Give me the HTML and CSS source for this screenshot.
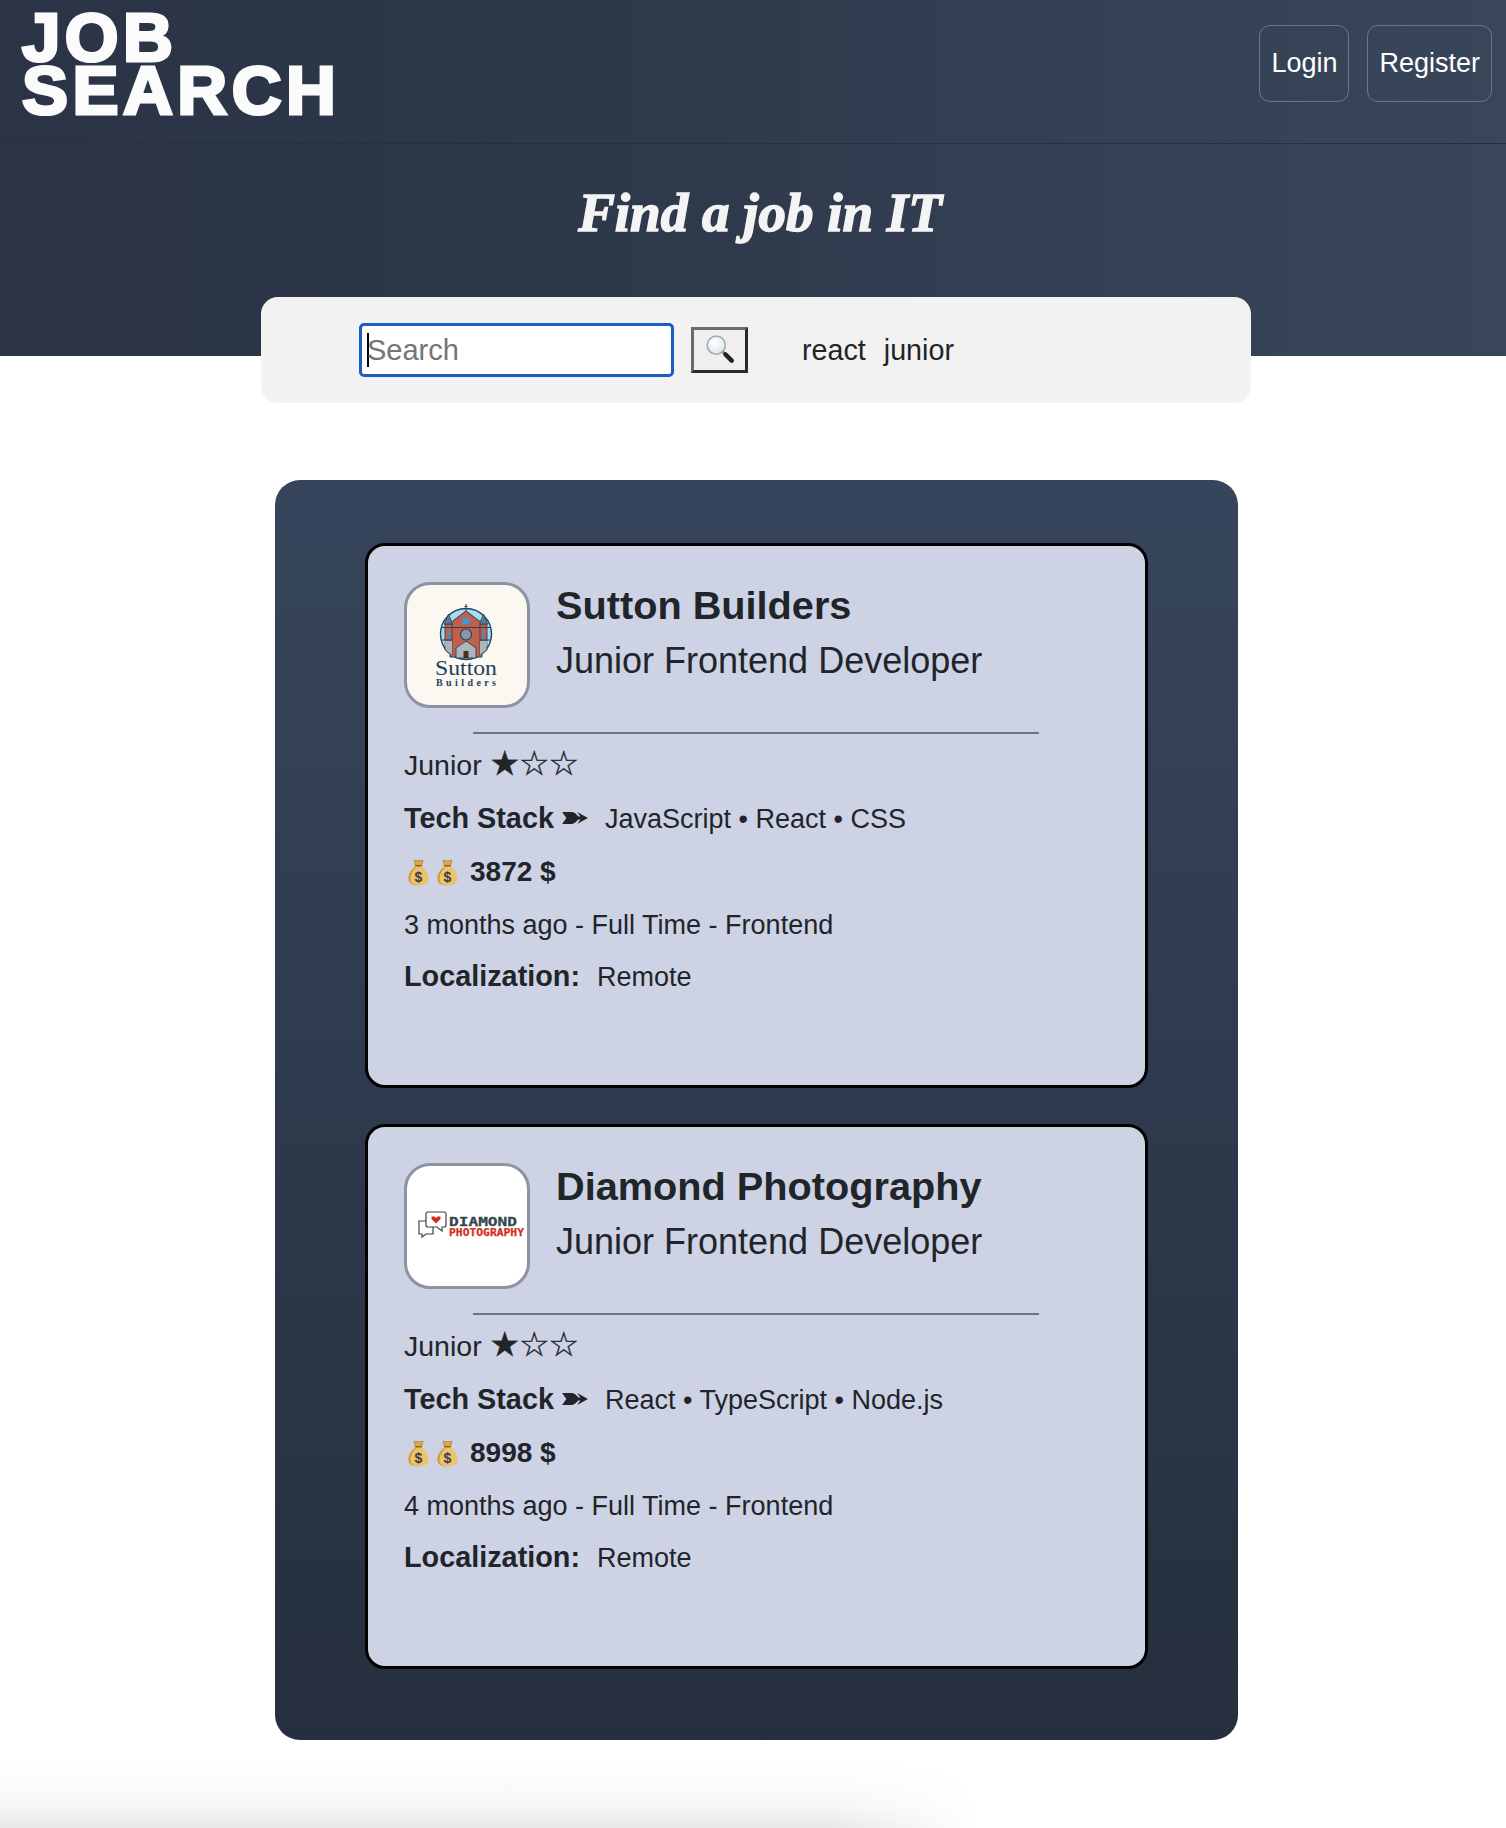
FILE: index.html
```html
<!DOCTYPE html>
<html lang="en">
<head>
<meta charset="utf-8">
<title>Job Search</title>
<link rel="stylesheet" href="styles.css">
</head>
<body>
<svg class="defs" width="0" height="0" aria-hidden="true">
  <defs>
    <symbol id="bag" viewBox="0 0 21 27">
      <path d="M6 1 C7.500 2.400 9.500 1 10.500 1.800 C11.500 1 13.500 2.400 15 1 L13.500 7 H7.500 Z" fill="#d9a94a" stroke="#9a7326" stroke-width=".6"/>
      <path d="M7.500 7 H13.500 C17.500 10 20.500 15 20.500 19.500 C20.500 24.500 16.500 26.500 10.500 26.500 C4.500 26.500 .5 24.500 .5 19.500 C.5 15 3.500 10 7.500 7 Z" fill="#ecc367"/>
      <path d="M2.500 20 C2.500 15 5.500 10.500 8.500 8 H7.500 C3.500 10 .5 15 .5 19.500 C.5 24.500 4.500 26.500 10.500 26.500 C5 26 2.500 24 2.500 20 Z" fill="#c99a3d"/>
      <rect x="7" y="6" width="7" height="1.600" rx=".8" fill="#8a6420"/>
      <text x="10.500" y="22.500" text-anchor="middle" class="bag-dollar">$</text>
    </symbol>
    <symbol id="arrow" viewBox="0 0 24 13">
      <path d="M0 1 H9 C12 1 14 4 15 5 H17 L14 1 L24 6.500 L14 12 L17 8 H15 C14 9 12 12 9 12 H0 L4 6.500 Z" fill="#212529"/>
    </symbol>
  </defs>
</svg>
<header class="topbar">
  <a class="logo">JOB<br>SEARCH</a>
  <nav class="auth">
    <a class="auth-btn">Login</a>
    <a class="auth-btn">Register</a>
  </nav>
</header>
<section class="hero">
  <h1 class="hero-title">Find a job in IT</h1>
</section>
<form class="searchbar">
  <div class="search-input"><span class="caret"></span><span class="placeholder">Search</span></div>
  <button class="search-btn" type="button" aria-label="Search">
    <svg width="32" height="32" viewBox="0 0 30 30">
      <defs><radialGradient id="lens" cx=".4" cy=".35" r=".8"><stop offset="0" stop-color="#ffffff"/><stop offset="1" stop-color="#d5e3ea"/></radialGradient></defs>
      <circle cx="11.500" cy="10.500" r="8.500" fill="url(#lens)" stroke="#a3a8ab" stroke-width="1.500"/>
      <path d="M17.500 16.500 L19.500 18.500" stroke="#8d8d8d" stroke-width="2.400"/>
      <path d="M20 19 L26 25" stroke="#222" stroke-width="4.200" stroke-linecap="round"/>
    </svg>
  </button>
  <div class="tags"><span>react</span><span>junior</span></div>
</form>
<main class="panel">
  <article class="card">
    <div class="card-head">
      <div class="avatar avatar-cream">
        <svg width="120" height="120" viewBox="3 3 120 120">
          <circle cx="62" cy="52" r="25.500" fill="#a9dcef" stroke="#1f4563" stroke-width="1.400"/>
          <path d="M62 22 V29 M60.500 24.500 H63.500" stroke="#1f4563" stroke-width="1"/>
          <path d="M46 41 L62 29 L78 41 V75 H46 Z" fill="#c0604a" stroke="#1f4563" stroke-width="1"/>
          <path d="M41 42 H48 V73 L41 68 Z M76 42 H83 V68 L76 73 Z" fill="#c0604a" stroke="#1f4563" stroke-width=".9"/>
          <path d="M40.500 42 L44.500 32 L48.500 42 Z M75.500 42 L79.500 32 L83.500 42 Z" fill="#67788a" stroke="#1f4563" stroke-width=".8"/>
          <rect x="58.500" y="36" width="7" height="6" fill="#3d9bd0"/>
          <path d="M38 45.500 H86 M37.500 58 H48 M76 58 H86.500" stroke="#1f4563" stroke-width="1.100"/>
          <circle cx="62" cy="52.500" r="5.500" fill="#8b97a0" stroke="#1f4563" stroke-width="1.200"/>
          <path d="M44 50 H46 V56.500 H44 Z M78 50 H80 V56.500 H78 Z" fill="#2f96d6"/>
          <path d="M40 59 H48 V73 L42 68 Z M76 59 H84 L82 68 L76 73 Z" fill="#aeb5ba"/>
          <path d="M52 76 V66 L62 59 L72 66 V76 Z" fill="#aeb5ba" stroke="#1f4563" stroke-width=".9"/>
          <rect x="59.500" y="69" width="5" height="7" fill="#4a2c1a"/>
          <text x="62" y="93" text-anchor="middle" textLength="62" lengthAdjust="spacingAndGlyphs" class="sutton-name">Sutton</text>
          <text x="62" y="104" text-anchor="middle" textLength="60" class="sutton-sub">Builders</text>
        </svg>
      </div>
      <div class="card-title">
        <h2 class="company">Sutton Builders</h2>
        <p class="role">Junior Frontend Developer</p>
      </div>
    </div>
    <hr class="divider">
    <p class="row row-level"><span class="level">Junior </span><span class="stars">★☆☆</span></p>
    <p class="row"><b class="label">Tech Stack</b><svg class="arrow"><use href="#arrow"/></svg><span class="value">JavaScript • React • CSS</span></p>
    <p class="row row-pay"><svg class="bag"><use href="#bag"/></svg><svg class="bag"><use href="#bag"/></svg><b class="amount">3872 $</b></p>
    <p class="row">3 months ago - Full Time - Frontend</p>
    <p class="row row-place"><b class="label">Localization:</b><span class="value">Remote</span></p>
  </article>
  <article class="card">
    <div class="card-head">
      <div class="avatar">
        <svg width="120" height="120" viewBox="3 3 120 120">
          <path d="M15 58 H29 V71 H22 L18 74 V71 H15 Z" fill="none" stroke="#37474f" stroke-width="1.200"/>
          <path d="M24 49 H40 Q42 49 42 51 V62 Q42 64 40 64 H38 L38 68 L33 64 H24 Q22 64 22 62 V51 Q22 49 24 49 Z" fill="#fff" stroke="#37474f" stroke-width="1.200"/>
          <path d="M32 60.500 L27.500 56 V53.500 H30.500 L32 55 L33.500 53.500 H36.500 V56 Z" fill="#d32f1f"/>
          <text x="45" y="63" textLength="68" lengthAdjust="spacingAndGlyphs" class="dia-main">DIAMOND</text>
          <text x="45" y="72.500" textLength="75" lengthAdjust="spacingAndGlyphs" class="dia-sub">PHOTOGRAPHY</text>
        </svg>
      </div>
      <div class="card-title">
        <h2 class="company">Diamond Photography</h2>
        <p class="role">Junior Frontend Developer</p>
      </div>
    </div>
    <hr class="divider">
    <p class="row row-level"><span class="level">Junior </span><span class="stars">★☆☆</span></p>
    <p class="row"><b class="label">Tech Stack</b><svg class="arrow"><use href="#arrow"/></svg><span class="value">React • TypeScript • Node.js</span></p>
    <p class="row row-pay"><svg class="bag"><use href="#bag"/></svg><svg class="bag"><use href="#bag"/></svg><b class="amount">8998 $</b></p>
    <p class="row">4 months ago - Full Time - Frontend</p>
    <p class="row row-place"><b class="label">Localization:</b><span class="value">Remote</span></p>
  </article>
</main>
<div class="page-fade"></div>
</body>
</html>
```
FILE: styles.css
```css
* { box-sizing: border-box; }
html, body { margin: 0; padding: 0; }
body {
  background: #fff;
  color: #212529;
  font-family: "Liberation Sans", Arial, sans-serif;
  height: 1828px;
  overflow: hidden;
}
.defs { display: block; height: 0; }
.topbar {
  height: 144px;
  display: flex;
  justify-content: space-between;
  align-items: flex-start;
  padding: 0 14px 0 22px;
  background: linear-gradient(90deg, #2a3446, #2c3749 33%, #39465a);
  border-bottom: 1px solid #263040;
}
.logo {
  margin-top: 11px;
  font-size: 69px;
  line-height: 53px;
  font-weight: 700;
  color: #fbfbfb;
  letter-spacing: 4.500px;
  -webkit-text-stroke: 3.200px #fbfbfb;
}
.auth { display: flex; gap: 18px; margin-top: 25px; }
.auth-btn {
  height: 77px;
  padding: 0 11px;
  display: flex;
  align-items: center;
  border: 1px solid #6d7686;
  border-radius: 11px;
  color: #fff;
  font-size: 27px;
}
.hero {
  height: 212px;
  background: linear-gradient(90deg, #2a3446, #2c3749 33%, #39465a);
  display: flex;
  justify-content: center;
}
.hero-title {
  margin: 29px 0 0 14px;
  font-family: "Liberation Serif", serif;
  font-style: italic;
  font-weight: 700;
  font-size: 55px;
  line-height: 80px;
  color: #f4f4f4;
  -webkit-text-stroke: 1.500px #f4f4f4;
}
.searchbar {
  width: 990px;
  height: 106px;
  margin: -59px 0 0 261px;
  padding-left: 98px;
  display: flex;
  align-items: center;
  background: #f2f2f2;
  border-radius: 17px;
}
.search-input {
  width: 315px;
  height: 54px;
  padding-left: 5px;
  display: flex;
  align-items: center;
  background: #fff;
  border: 3px solid #1f5bc4;
  border-radius: 5px;
  font-size: 29px;
}
.caret { width: 2px; height: 34px; background: #000; flex: none; }
.placeholder { color: #757575; margin-left: -2px; }
.search-btn {
  width: 57px;
  height: 46px;
  margin-left: 17px;
  padding: 0;
  display: flex;
  align-items: center;
  justify-content: center;
  background: #efefef;
  border-style: solid;
  border-width: 3px;
  border-color: #6b6b6b #2a2a2a #2a2a2a #6b6b6b;
}
.tags {
  margin-left: 54px;
  display: flex;
  gap: 18px;
  font-size: 28.700px;
}
.panel {
  width: 963px;
  height: 1260px;
  margin: 77px 0 0 275px;
  padding: 63px 90px 0;
  display: flex;
  flex-direction: column;
  gap: 36px;
  background: linear-gradient(180deg, #37455c, #252f3d);
  border-radius: 25px;
}
.card {
  height: 545px;
  padding: 36px 36px 0;
  background: #cdd3e5;
  border: 3px solid #000;
  border-radius: 20px;
}
.card-head { display: flex; gap: 26px; align-items: flex-start; }
.avatar {
  width: 126px;
  height: 126px;
  flex: none;
  display: flex;
  background: #fff;
  border: 3px solid #8e93a3;
  border-radius: 26px;
}
.avatar-cream { background: #fbf8f1; }
.card-title { margin-top: -1px; }
.company {
  margin: 0;
  font-size: 39.700px;
  line-height: 48px;
  font-weight: 700;
}
.role {
  margin: 11px 0 0;
  font-size: 36px;
  line-height: 42px;
}
.divider {
  width: 566px;
  height: 2px;
  margin: 24px 0 0 69px;
  border: 0;
  background: #6f7280;
}
.row {
  margin: 0;
  height: 52.500px;
  display: flex;
  align-items: baseline;
  line-height: 52.500px;
  font-size: 27px;
  white-space: pre;
}
.row-level { margin-top: 5px; }
.row-pay { margin-top: 2px; }
.row-place { margin-top: -1px; }
.level { font-size: 28.500px; }
.stars {
  font-family: "DejaVu Sans", sans-serif;
  font-size: 34px;
  line-height: 1;
  letter-spacing: -1px;
  -webkit-text-stroke: .4px #212529;
}
.label { font-size: 28.800px; }
.arrow { width: 26px; height: 14px; margin-left: 8px; align-self: center; flex: none; }
.value { margin-left: 17px; }
.bag { width: 21px; height: 27px; margin: 0 8px 0 4px; align-self: center; flex: none; }
.bag + .bag { margin-left: 0; }
.bag-dollar { font: 700 14px "Liberation Sans", sans-serif; fill: #3a3a50; }
.amount { margin-left: 4px; font-size: 28px; }
.sutton-name { font: 22px "Liberation Serif", serif; fill: #1f3f5f; }
.sutton-sub { font: 700 10px "Liberation Serif", serif; fill: #1f3f5f; }
.dia-main { font: 700 13px "DejaVu Sans Mono", monospace; fill: #37474f; stroke: #37474f; stroke-width: .3px; }
.dia-sub { font: 700 10px "DejaVu Sans Mono", monospace; fill: #d32f1f; stroke: #d32f1f; stroke-width: .25px; }
.page-fade {
  height: 68px;
  margin-top: 20px;
  background: linear-gradient(180deg, #fff, #fcfcfc 30%, #f5f5f5 70%, #e8e8e8);
  -webkit-mask-image: linear-gradient(90deg, #000 55%, transparent 65%);
  mask-image: linear-gradient(90deg, #000 55%, transparent 65%);
}
```
